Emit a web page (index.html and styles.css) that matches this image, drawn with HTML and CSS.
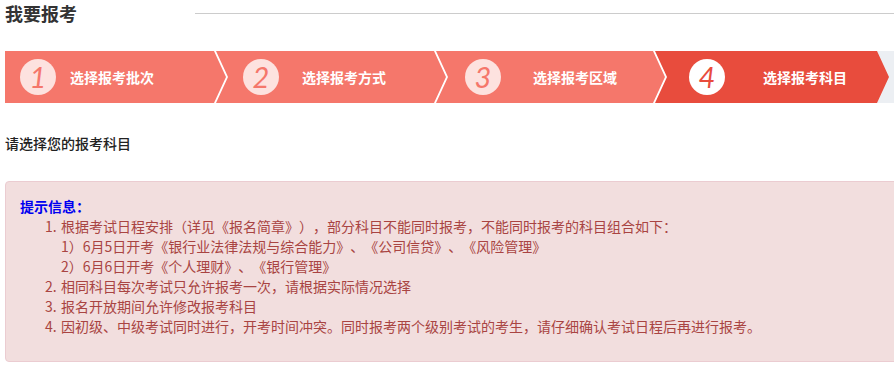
FILE: index.html
```html
<!DOCTYPE html>
<html lang="zh-CN">
<head>
  <meta charset="UTF-8">
  <meta name="viewport" content="width=device-width, initial-scale=1.0">
  <title>我要报考</title>
  <link rel="stylesheet" href="styles.css">
</head>
<body>
  <div class="page">
    <!-- Kopfzeile -->
    <div class="header">
      <h2>我要报考</h2>
      <div class="header-line"></div>
    </div>

    <!-- Schritte -->
    <div class="steps">
      <div class="step step-1"><span class="step-num">1</span><span class="step-text">选择报考批次</span></div>
      <div class="step step-2"><span class="step-num">2</span><span class="step-text">选择报考方式</span></div>
      <div class="step step-3"><span class="step-num">3</span><span class="step-text">选择报考区域</span></div>
      <div class="step step-4 active"><span class="step-num">4</span><span class="step-text">选择报考科目</span></div>
      <div class="steps-rest"></div>
    </div>

    <p class="choose">请选择您的报考科目</p>

    <!-- Hinweisbox -->
    <div class="tip">
      <p class="tip-title">提示信息：</p>
      <ol class="tip-list">
        <li><span class="num">1.</span>根据考试日程安排（详见《报名简章》），部分科目不能同时报考，不能同时报考的科目组合如下：
          <div class="sub">1）6月5日开考《银行业法律法规与综合能力》、《公司信贷》、《风险管理》</div>
          <div class="sub">2）6月6日开考《个人理财》、《银行管理》</div>
        </li>
        <li><span class="num">2.</span>相同科目每次考试只允许报考一次，请根据实际情况选择</li>
        <li><span class="num">3.</span>报名开放期间允许修改报考科目</li>
        <li><span class="num">4.</span>因初级、中级考试同时进行，开考时间冲突。同时报考两个级别考试的考生，请仔细确认考试日程后再进行报考。</li>
      </ol>
    </div>
  </div>
</body>
</html>
```

FILE: styles.css
```css
/* Grundeinstellungen */
body {
  margin: 0;
  overflow: hidden;
  font-family: "Noto Sans CJK SC", "Liberation Sans", sans-serif;
  color: #333;
  background: #fff;
  text-spacing-trim: space-all;
}
.page {
  width: 1000px;
  padding-left: 5px;
}
/* Kopfzeile */
.header {
  display: flex;
  align-items: center;
  height: 26px;
}
.header h2 {
  margin: 0;
  width: 190px;
  font-size: 18px;
  font-weight: bold;
  color: #333;
  line-height: 26px;
}
.header-line {
  flex: 1;
  border-top: 1px solid #ccc;
}
/* Schrittleiste */
.steps {
  display: flex;
  height: 52px;
  margin-top: 25px;
}
.step {
  position: relative;
  z-index: 1;
  flex: none;
  display: flex;
  align-items: center;
  box-sizing: border-box;
  height: 52px;
  background: #f5776b;
  color: #fff;
  font-size: 14px;
  font-weight: bold;
  margin-left: -10px;
  clip-path: polygon(0 0, calc(100% - 12px) 0, 100% 50%, calc(100% - 12px) 100%, 0 100%, 12px 50%);
}
.step-1 {
  margin-left: 0;
  width: 221px;
  padding-left: 15px;
  gap: 14px;
  clip-path: polygon(0 0, calc(100% - 12px) 0, 100% 50%, calc(100% - 12px) 100%, 0 100%);
}
.step-2 {
  width: 230px;
  padding-left: 27px;
  gap: 23px;
}
.step-3 {
  width: 229px;
  padding-left: 29px;
  gap: 32px;
}
.step-4 {
  width: 234px;
  padding-left: 34px;
  gap: 38px;
}
.step.active {
  background: #e84c3d;
}
.step-num {
  flex: none;
  width: 36px;
  height: 36px;
  border-radius: 50%;
  background: #fde2df;
  color: #f5776b;
  font-family: "Lato", "Open Sans", sans-serif;
  font-style: italic;
  font-weight: normal;
  font-size: 29px;
  line-height: 36px;
  text-align: center;
}
.active .step-num {
  background: #fff;
  color: #e84c3d;
}
.steps-rest {
  flex: 1;
  margin-left: -12px;
  background: #eceff3;
}
/* Hinweis */
.choose {
  margin: 30px 0 0;
  font-size: 14px;
  line-height: 20px;
  color: #222;
  font-weight: 500;
}
.tip {
  margin-top: 28px;
  padding: 14px 14px 25px;
  border: 1px solid #ebccd1;
  border-radius: 4px;
  background: #f2dede;
  color: #a94442;
  font-size: 14px;
  line-height: 20px;
}
.tip-title {
  margin: 0;
  color: #0000f0;
  font-weight: bold;
}
.tip-list {
  margin: 0;
  padding-left: 25px;
  list-style: none;
}
.tip-list .num {
  display: inline-block;
  width: 16px;
}
.tip-list .sub {
  padding-left: 16px;
}
```
